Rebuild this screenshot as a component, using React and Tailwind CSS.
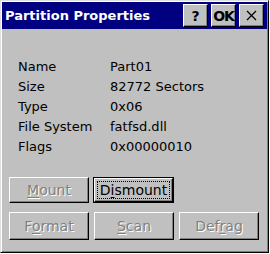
const rows = [
  ['Name', 'Part01'],
  ['Size', '82772 Sectors'],
  ['Type', '0x06'],
  ['File System', 'fatfsd.dll'],
  ['Flags', '0x00000010'],
]

function Label({ pre, u, post }) {
  return <span>{pre}<span className="underline underline-offset-2">{u}</span>{post}</span>
}

function Btn({ children, h = 'h-[26px]' }) {
  return (
    <div className={`w-[80px] ${h} flex items-center justify-center border border-t-white border-l-white border-r-black border-b-black shadow-[inset_-1px_-1px_0_#808080] text-[14px] text-[#808080] [text-shadow:1px_1px_0_#ffffff]`}>
      {children}
    </div>
  )
}

function TitleBtn({ children }) {
  return (
    <div className="w-[25px] h-[23px] flex items-center justify-center bg-[#c0c0c0] border border-t-white border-l-white border-r-black border-b-black shadow-[inset_-1px_-1px_0_#808080] text-black font-bold text-[14px] leading-none">
      {children}
    </div>
  )
}

export default function App() {
  return (
    <div className="w-[270px] h-[254px] bg-white font-['DejaVu_Sans',sans-serif]">
      <div className="w-[269px] h-[253px] flex flex-col p-[1px] bg-[#c0c0c0] border border-t-[#dfdfdf] border-l-[#dfdfdf] border-r-black border-b-black shadow-[inset_1px_1px_0_#ffffff,inset_-1px_-1px_0_#808080]">
        <div className="h-[27px] flex items-center bg-[#000080] pl-[3px] pr-[3px]">
          <span className="text-white font-bold text-[13px]">Partition Properties</span>
          <div className="flex-1" />
          <div className="flex gap-[3px]">
            <TitleBtn>?</TitleBtn>
            <TitleBtn><span className="tracking-[-1px]">OK</span></TitleBtn>
            <TitleBtn>
              <svg width="11" height="11" viewBox="0 0 11 11">
                <path d="M1 1L10 10M10 1L1 10" stroke="#000" strokeWidth="1.3" fill="none" />
              </svg>
            </TitleBtn>
          </div>
        </div>

        <div className="pl-[16px] pt-[28px] grid grid-cols-[92px_1fr] text-[13px] leading-[20px] text-black">
          {rows.map(([k, v]) => (
            <div key={k} className="contents">
              <span>{k}</span>
              <span>{v}</span>
            </div>
          ))}
        </div>

        <div className="pl-[7px] mt-[20px] flex flex-col gap-[9px]">
          <div className="flex gap-[4px]">
            <Btn><Label pre="" u="M" post="ount" /></Btn>
            <div className="w-[81px] h-[26px] border border-black">
              <div className="w-full h-full flex items-center justify-center border border-t-white border-l-white border-r-black border-b-black shadow-[inset_-1px_-1px_0_#808080] p-[2px]">
                <div className="w-full h-full flex items-center justify-center border border-dotted border-black text-[14px] text-black">
                  <Label pre="D" u="i" post="smount" />
                </div>
              </div>
            </div>
          </div>
          <div className="flex gap-[5px]">
            <Btn h="h-[28px]"><Label pre="F" u="o" post="rmat" /></Btn>
            <Btn h="h-[28px]"><Label pre="" u="S" post="can" /></Btn>
            <Btn h="h-[28px]"><Label pre="Def" u="r" post="ag" /></Btn>
          </div>
        </div>
      </div>
    </div>
  )
}
